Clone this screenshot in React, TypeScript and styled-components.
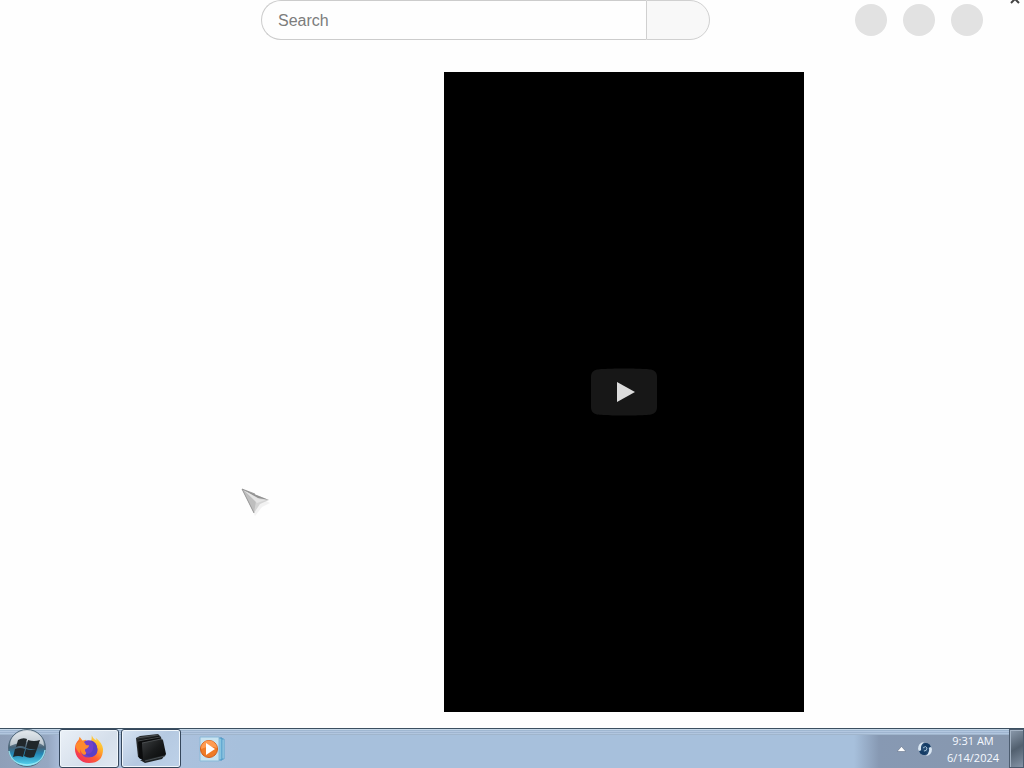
import React from "react";
import styled, { createGlobalStyle } from "styled-components";

const GlobalStyle = createGlobalStyle`
  *, *::before, *::after { box-sizing: border-box; }
  body { margin: 0; background: #fefefe; font-family: "Liberation Sans", Arial, sans-serif; }
  button, input { font: inherit; margin: 0; }
`;

const Desktop = styled.div`
  position: relative;
  display: flex;
  flex-direction: column;
  min-height: 100vh;
  overflow: hidden;
`;

const Masthead = styled.header`
  display: flex;
  align-items: center;
  justify-content: space-between;
  height: 40px;
  padding: 0 41px 0 261px;
`;

const SearchForm = styled.form`
  display: flex;
  flex: 0 1 449px;
  height: 40px;
`;

const SearchInput = styled.input`
  flex: 1;
  min-width: 0;
  padding: 1px 16px 0;
  border: 1px solid #cccccc;
  border-right: 0;
  border-radius: 20px 0 0 20px;
  background: #fefefe;
  color: #222222;
  font-size: 16px;
  outline: none;
  &::placeholder { color: #7c7c7c; opacity: 1; }
`;

const SearchButton = styled.button`
  width: 64px;
  padding: 0;
  border: 1px solid #d0d0d0;
  border-radius: 0 20px 20px 0;
  background: #f8f8f8;
`;

const Actions = styled.nav`
  display: flex;
  gap: 16px;
`;

const RoundButton = styled.button`
  width: 32px;
  height: 32px;
  padding: 0;
  border: 0;
  border-radius: 50%;
  background: #e2e2e2;
`;

const CloseButton = styled.button`
  position: absolute;
  top: -7px;
  right: 3px;
  width: 12px;
  height: 12px;
  padding: 0;
  border: 0;
  background: transparent;
  svg { display: block; }
`;

const Main = styled.main`
  display: flex;
  flex: 1;
  align-items: flex-start;
  justify-content: center;
  padding: 32px 0 16px 224px;
`;

const Player = styled.section`
  display: flex;
  align-items: center;
  justify-content: center;
  width: 360px;
  aspect-ratio: 9 / 16;
  background: #000000;
`;

const PlayButton = styled.button`
  width: 68px;
  height: 48px;
  padding: 0;
  border: 0;
  background: transparent;
  svg { display: block; }
`;

const Pointer = styled.svg`
  position: absolute;
  left: 240px;
  top: 486px;
  pointer-events: none;
`;

const Taskbar = styled.footer`
  display: flex;
  height: 40px;
  border-top: 1px solid #3b4f60;
  background:
    linear-gradient(180deg, #c6d8e8 0 1px, #9fb7d1 1px 2px, #b3c7e0 2px 3px, #9fb5d0 3px 4px, #b1c6df 4px 5px, #a0b5cc 5px 6px, transparent 6px),
    linear-gradient(90deg, #8e9fb8 0, #96a8c2 48px, #a9bcd8 60px, #abc1dd 180px, #a7c0dc 240px, #a7c0dc calc(100% - 170px), #8799b3 calc(100% - 145px), #8797ad 100%);
`;

const StartButton = styled.button`
  width: 57px;
  padding: 0 0 0 7px;
  border: 0;
  background: transparent;
  svg { display: block; }
`;

const Tasks = styled.div`
  display: flex;
  flex: 1;
  gap: 2px;
  padding-left: 2px;
`;

const TaskButton = styled.button<{ $state: "active" | "open" | "pinned" }>`
  display: flex;
  align-items: center;
  justify-content: center;
  width: 60px;
  height: 39px;
  padding: 0;
  border: 1px solid ${({ $state }) => ($state === "pinned" ? "transparent" : "#35475c")};
  border-radius: 3px;
  background: ${({ $state }) =>
    $state === "active"
      ? "linear-gradient(135deg, #eaf0f7, #d5dfeb 60%, #e0e8f1)"
      : $state === "open"
        ? "linear-gradient(135deg, #d7e3f2, #b5c9e1 50%, #bdd1e8)"
        : "transparent"};
  box-shadow: ${({ $state }) => ($state === "pinned" ? "none" : "inset 0 0 0 1px #f0f6fb")};
`;

const Tray = styled.div`
  display: flex;
  align-items: center;
`;

const TrayButton = styled.button`
  display: flex;
  align-items: center;
  justify-content: center;
  width: 24px;
  height: 24px;
  padding: 0;
  border: 0;
  background: transparent;
`;

const Clock = styled.time`
  display: flex;
  flex-direction: column;
  align-items: center;
  width: 72px;
  color: #f5f9ff;
  font: 11px/17px "Open Sans", "Noto Sans", sans-serif;
`;

const ShowDesktop = styled.button`
  width: 15px;
  height: 39px;
  padding: 0;
  border: 1px solid #4c5c6f;
  box-shadow: inset 1px 1px 0 #a5b4c5;
  background: linear-gradient(150deg, #8c9bad, #52606f 50%, #8493a6);
`;

const StartIcon = () => (
  <svg width="40" height="39" viewBox="0 0 40 39" aria-hidden="true">
    <defs>
      <linearGradient id="orb" x1="0" y1="0" x2="0" y2="1">
        <stop offset="0" stopColor="#d5dce2" />
        <stop offset=".3" stopColor="#8595a2" />
        <stop offset=".48" stopColor="#466276" />
        <stop offset=".65" stopColor="#2385b3" />
        <stop offset="1" stopColor="#5cdcf5" />
      </linearGradient>
    </defs>
    <circle cx="20" cy="19" r="18.5" fill="url(#orb)" stroke="#50697c" />
    <path d="M3 17C3 7 11 2 20 2s17 5 17 15C29 10 14 12 3 17Z" fill="#eef3f6" opacity=".65" />
    <path d="M2 22Q4 35 20 36Q36 35 38 21" fill="none" stroke="#a6edf8" strokeWidth="1.5" opacity=".8" />
    <path d="M11 11q5-3 9-1l-2 8q-5-2-9 0ZM21 11q6 2 12 0l-3 9q-5 1-11-1ZM8 20q5-2 10 0l-2 8q-5-2-10 0ZM19 20q5 2 11 0l-3 8q-5 2-10-1Z" fill="#20272b" />
  </svg>
);

const FirefoxIcon = () => (
  <svg width="30" height="30" viewBox="0 0 32 32" aria-hidden="true">
    <defs>
      <linearGradient id="flame" x1="1" y1="0" x2=".2" y2="1">
        <stop offset="0" stopColor="#fff05a" />
        <stop offset=".35" stopColor="#ffb52b" />
        <stop offset=".62" stopColor="#ff6130" />
        <stop offset="1" stopColor="#ef2861" />
      </linearGradient>
    </defs>
    <path d="M19 1q1 4 5 6 0-2-1-3 7 5 8 12 0 15-15 15C7 31 1 24 1 16q0-6 4-10l1-3 3 4 4-1q-1 2 0 4 4 1 5-1 1-4 1-8Z" fill="url(#flame)" />
    <path d="M11 8q3-2 7-1 7 2 7 10 0 7-9 8-8 0-8-7 0-4 3-5-1-3 0-5Z" fill="#7041ca" />
    <path d="M18 7q4 4 2 10-2 5-8 4 3 4 8 3 5-2 5-8-1-7-7-9Z" fill="#5a3fc4" />
    <path d="M2 11q3-4 8-3l2 2q0 2 4 2 0 3-4 4-1 2 1 4 0 3-3 2-3-2-3-6-1 3 0 5-6-4-5-10Z" fill="#ff8a2c" />
  </svg>
);

const ConsoleIcon = () => (
  <svg width="32" height="32" viewBox="0 0 32 32" aria-hidden="true">
    <defs>
      <linearGradient id="panel" x1="0" y1="0" x2="1" y2="1">
        <stop offset="0" stopColor="#3b3e40" />
        <stop offset=".5" stopColor="#191b1c" />
        <stop offset="1" stopColor="#060707" />
      </linearGradient>
    </defs>
    <path d="m1 5 4-2 18-2 3 3 1 5-18 18-6-3Z" fill="#25282a" />
    <path d="m3 7 21-4 2 3-19 5 2 17-5-3Z" fill="#0b0c0d" />
    <path d="m7 10 19-4 2 1 3 14-1 2-20 5-2-2Z" fill="url(#panel)" />
    <path d="m2 5 21-3M3 8l22-4M7 10l19-4 2 1" fill="none" stroke="#5a5f62" strokeWidth=".7" />
    <path d="m8 27 22-5-3 4-17 4-5-3Z" fill="#1d2123" />
    <path d="m10 28 20-5" stroke="#575d61" strokeWidth=".8" />
  </svg>
);

const MediaIcon = () => (
  <svg width="29" height="26" viewBox="0 0 29 26" aria-hidden="true">
    <path d="M7 3h18v20H7Z" fill="#b6ddee" stroke="#5ba4ce" />
    <path d="M4 2h19v22H4Z" fill="#88c5e1" stroke="#418fc0" />
    <path d="M1 1h19v24H1Z" fill="#c8e3f0" stroke="#8ab9d8" />
    <circle cx="10" cy="13" r="8.5" fill="#ef7b26" stroke="#d15c19" />
    <path d="M2 13a8 8 0 0 1 16-1Q11 9 2 13Z" fill="#ff9b50" />
    <path d="m7 7 9 6-9 6Z" fill="#fff" />
  </svg>
);

const tasks = [
  { name: "Firefox", state: "active", Icon: FirefoxIcon },
  { name: "Console", state: "open", Icon: ConsoleIcon },
  { name: "Media Player", state: "pinned", Icon: MediaIcon },
] as const;

export default function App() {
  return (
    <Desktop>
      <GlobalStyle />
      <Masthead>
        <SearchForm role="search" onSubmit={(e) => e.preventDefault()}>
          <SearchInput type="text" aria-label="Search" placeholder="Search" />
          <SearchButton type="submit" aria-label="Submit search" />
        </SearchForm>
        <Actions aria-label="Account">
          {["Create", "Notifications", "Profile"].map((name) => (
            <RoundButton key={name} type="button" aria-label={name} />
          ))}
        </Actions>
      </Masthead>
      <CloseButton type="button" aria-label="Close">
        <svg width="12" height="12" viewBox="0 0 12 12">
          <path d="m2 2 8 8M10 2l-8 8" stroke="#444" strokeWidth="2" />
        </svg>
      </CloseButton>
      <Main>
        <Player aria-label="Video player">
          <PlayButton type="button" aria-label="Play">
            <svg width="68" height="48" viewBox="0 0 68 48">
              <path d="M61 1.6C55.8.6 34 .5 34 .5S12.2.6 7 1.6C3 2.4 1 5 1 9v30c0 4 2 6.600 6 7.400 5.200 1 27 1.100 27 1.100s21.800-.1 27-1.100c4-.8 6-3.400 6-7.400V9c0-4-2-6.600-6-7.400Z" fill="#171717" />
              <path d="m27 14 18 10-18 10Z" fill="#dcdcdc" />
            </svg>
          </PlayButton>
        </Player>
      </Main>
      <Taskbar>
        <StartButton type="button" aria-label="Start"><StartIcon /></StartButton>
        <Tasks>
          {tasks.map(({ name, state, Icon }) => (
            <TaskButton key={name} type="button" $state={state} aria-label={name}><Icon /></TaskButton>
          ))}
        </Tasks>
        <Tray>
          <TrayButton type="button" aria-label="Show hidden icons">
            <svg width="9" height="6" viewBox="0 0 9 6"><path d="m0 5.500 4.500-5 4.500 5Z" fill="#fff" stroke="#53627a" strokeWidth=".5" /></svg>
          </TrayButton>
          <TrayButton type="button" aria-label="Sync status">
            <svg width="16" height="16" viewBox="0 0 16 16">
              <circle cx="8" cy="8" r="6" fill="#254b73" />
              <path d="M7 1Q1 2 1 8l2 4 2-1Q2 6 7 1ZM9 15q6-1 6-7l-2-4-2 1q3 5-2 10Z" fill="#d9e6f2" />
              <path d="M8 2q5 0 6 4l-3 1Q9 4 6 5ZM8 14q-5 0-6-4l3-1q2 3 5 2Z" fill="#153c66" />
              <path d="M6 7q3-3 4 0 0 3-3 3" fill="none" stroke="#9bb9d1" strokeWidth="1" />
            </svg>
          </TrayButton>
          <Clock dateTime="2024-06-14T09:31"><span>9:31 AM</span><span>6/14/2024</span></Clock>
          <ShowDesktop type="button" aria-label="Show desktop" />
        </Tray>
      </Taskbar>
      <Pointer width="31" height="31" viewBox="0 0 31 31" aria-hidden="true">
        <path d="m4 4 26 13-8 4-7 9Z" fill="#d8d8d8" opacity=".3" />
        <path d="M2 3 29 14 20 18 14 27Z" fill="#d4d4d4" />
        <path d="m2 3 12 24 2-12Z" fill="#bebebe" />
        <path d="m2 3 16 9 11 2Z" fill="#929292" />
        <path d="m5 5 14 8 7 1-9 3Z" fill="#e4e4e4" />
        <path d="m2 3 12 24M2 3l13 5" fill="none" stroke="#888" strokeWidth=".8" />
      </Pointer>
    </Desktop>
  );
}
